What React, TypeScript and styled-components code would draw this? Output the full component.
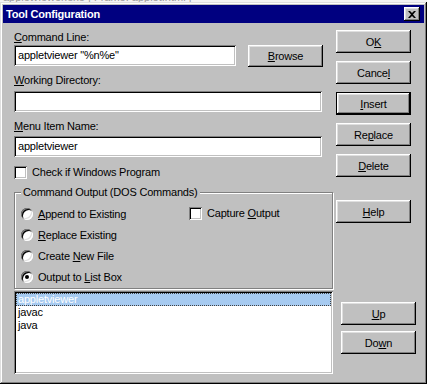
import React, { useState } from 'react';
import styled, { createGlobalStyle, css } from 'styled-components';

const GlobalStyle = createGlobalStyle`
  html, body {
    margin: 0;
    padding: 0;
    background: #ffffff;
  }
  body {
    font-family: "Liberation Sans", Arial, sans-serif;
    font-size: 11px;
    color: #000;
  }
`;

const raised = css`
  box-shadow: inset -1px -1px #000000, inset 1px 1px #ffffff,
    inset -2px -2px #808080, inset 2px 2px #dfdfdf;
`;

const sunken = css`
  box-shadow: inset 1px 1px #808080, inset -1px -1px #ffffff,
    inset 2px 2px #000000, inset -2px -2px #c0c0c0;
`;

const Page = styled.div`
  display: flex;
  flex-direction: column;
  width: 430px;
  height: 388px;
  overflow: hidden;
`;

// the window behind the dialog, only its bottom edge shows
const BackStrip = styled.div`
  height: 2px;
  width: 427px;
  overflow: hidden;
  background: #f4f4f4;
  color: #9a9a9a;
  font-size: 11px;
  line-height: 11px;
  white-space: nowrap;
  padding-left: 3px;
  box-sizing: border-box;
`;

const BackText = styled.div`
  margin-top: -8px;
`;

const Dialog = styled.div`
  width: 427px;
  height: 382px;
  box-sizing: border-box;
  background: #c0c0c0;
  padding: 3px;
  box-shadow: inset -1px -1px #000000, inset 1px 1px #dfdfdf,
    inset -2px -2px #808080, inset 2px 2px #ffffff;
`;

const TitleBar = styled.div`
  height: 18px;
  background: #000080;
  display: flex;
  align-items: center;
  justify-content: space-between;
  padding: 0 4px 0 3px;
`;

const TitleText = styled.span`
  color: #ffffff;
  font-weight: bold;
  font-size: 11px;
  letter-spacing: -0.2px;
`;

const CloseButton = styled.button`
  width: 16px;
  height: 14px;
  padding: 0;
  border: 0;
  background: #c0c0c0;
  display: flex;
  align-items: center;
  justify-content: center;
  ${raised};
`;

const Body = styled.div`
  display: flex;
  padding: 0 0 0 11px;
`;

const LeftColumn = styled.div`
  width: 319px;
  display: flex;
  flex-direction: column;
`;

const RightColumn = styled.div`
  margin-left: 3px;
  padding-top: 7px;
  width: 80px;
  display: flex;
  flex-direction: column;
`;

const Label = styled.div<{ $top: number }>`
  margin-top: ${({ $top }) => $top}px;
  line-height: 13px;
  height: 13px;
  letter-spacing: -0.2px;
  white-space: nowrap;
`;

const Key = styled.span`
  text-decoration: underline;
  text-underline-offset: 1px;
`;

const FieldRow = styled.div`
  display: flex;
  align-items: flex-start;
  margin-top: 1px;
`;

const TextField = styled.div<{ $width: number; $top?: number }>`
  width: ${({ $width }) => $width}px;
  height: 21px;
  margin-top: ${({ $top }) => $top ?? 0}px;
  box-sizing: border-box;
  background: #ffffff;
  padding: 0 4px;
  line-height: 21px;
  letter-spacing: -0.2px;
  white-space: nowrap;
  ${sunken};
`;

const Button = styled.button<{ $default?: boolean; $top?: number; $shift?: number }>`
  width: 75px;
  height: 23px;
  margin-top: ${({ $top }) => $top ?? 0}px;
  margin-left: ${({ $shift }) => $shift ?? 0}px;
  padding: 0;
  border: 0;
  background: #c0c0c0;
  font-family: "Liberation Sans", Arial, sans-serif;
  font-size: 11px;
  letter-spacing: -0.2px;
  color: #000;
  ${({ $default }) =>
    $default
      ? css`
          box-shadow: inset 0 0 0 1px #000000, inset -2px -2px #000000,
            inset 2px 2px #ffffff, inset -3px -3px #808080,
            inset 3px 3px #dfdfdf;
        `
      : raised};
`;

const BrowseButton = styled(Button)`
  margin-left: 12px;
  margin-top: 0;
  height: 22px;
`;

const CheckRow = styled.div<{ $top?: number }>`
  display: flex;
  align-items: center;
  gap: 5px;
  height: 14px;
  margin-top: ${({ $top }) => $top ?? 0}px;
  letter-spacing: -0.2px;
  white-space: nowrap;
`;

const CheckBox = styled.span`
  width: 13px;
  height: 13px;
  box-sizing: border-box;
  background: #ffffff;
  flex: none;
  ${sunken};
`;

const Group = styled.div`
  position: relative;
  margin-top: 13px;
  height: 97px;
  box-sizing: border-box;
  border: 1px solid #808080;
  box-shadow: inset 1px 1px #ffffff, 1px 1px #ffffff;
  display: flex;
  padding: 10px 0 0 6px;
`;

const Legend = styled.span`
  position: absolute;
  top: -7px;
  left: 6px;
  padding: 0 2px;
  background: #c0c0c0;
  line-height: 13px;
  letter-spacing: -0.2px;
  white-space: nowrap;
`;

const RadioList = styled.div`
  width: 168px;
  display: flex;
  flex-direction: column;
`;

const RadioRow = styled.label`
  display: flex;
  align-items: center;
  gap: 5px;
  height: 21px;
  letter-spacing: -0.2px;
  white-space: nowrap;
`;

const RadioDot = styled.span<{ $on: boolean }>`
  width: 12px;
  height: 12px;
  border-radius: 50%;
  background: #ffffff;
  flex: none;
  position: relative;
  box-shadow: inset 1px 1px #808080, inset -1px -1px #ffffff,
    inset 2px 2px #000000, inset -2px -2px #dfdfdf;
  &::after {
    content: '';
    display: ${({ $on }) => ($on ? 'block' : 'none')};
    position: absolute;
    left: 4px;
    top: 4px;
    width: 4px;
    height: 4px;
    border-radius: 50%;
    background: #000;
  }
`;

const CaptureCol = styled.div`
  padding-top: 3px;
`;

const ListBox = styled.div`
  margin-top: 2px;
  width: 319px;
  height: 83px;
  box-sizing: border-box;
  background: #ffffff;
  padding: 2px;
  ${sunken};
`;

const ListItem = styled.div<{ $selected?: boolean }>`
  height: 13px;
  line-height: 13px;
  padding-left: 2px;
  box-sizing: border-box;
  letter-spacing: -0.2px;
  color: ${({ $selected }) => ($selected ? '#ffffff' : '#000000')};
  background: ${({ $selected }) => ($selected ? '#a6caf0' : 'transparent')};
  outline: ${({ $selected }) => ($selected ? '1px dotted #404040' : 'none')};
  outline-offset: -1px;
`;

const radios = [
  { pre: '', key: 'A', post: 'ppend to Existing' },
  { pre: '', key: 'R', post: 'eplace Existing' },
  { pre: 'Create ', key: 'N', post: 'ew File' },
  { pre: 'Output to ', key: 'L', post: 'ist Box' },
];

const tools = ['appletviewer', 'javac', 'java'];

export default function App() {
  const [choice, setChoice] = useState(3);
  const [selected, setSelected] = useState(0);

  return (
    <Page>
      <GlobalStyle />
      <BackStrip>
        <BackText>appletviewer.exe | Frame: applet.html |</BackText>
      </BackStrip>
      <Dialog>
        <TitleBar>
          <TitleText>Tool Configuration</TitleText>
          <CloseButton aria-label="Close">
            <svg width="8" height="7" viewBox="0 0 8 7">
              <path d="M0 0h2l2 2 2-2h2L5 3.5 8 7H6L4 5 2 7H0l3-3.5z" fill="#000" />
            </svg>
          </CloseButton>
        </TitleBar>
        <Body>
          <LeftColumn>
            <Label $top={8}>
              <Key>C</Key>ommand Line:
            </Label>
            <FieldRow>
              <TextField $width={222}>appletviewer "%n%e"</TextField>
              <BrowseButton>
                <Key>B</Key>rowse
              </BrowseButton>
            </FieldRow>
            <Label $top={7}>
              <Key>W</Key>orking Directory:
            </Label>
            <TextField $width={308} $top={4} />
            <Label $top={8}>
              <Key>M</Key>enu Item Name:
            </Label>
            <TextField $width={308} $top={3}>appletviewer</TextField>
            <CheckRow $top={8}>
              <CheckBox />
              Check if Windows Program
            </CheckRow>
            <Group>
              <Legend>Command Output (DOS Commands)</Legend>
              <RadioList>
                {radios.map((r, i) => (
                  <RadioRow key={i} onClick={() => setChoice(i)}>
                    <RadioDot $on={choice === i} />
                    <span>
                      {r.pre}
                      <Key>{r.key}</Key>
                      {r.post}
                    </span>
                  </RadioRow>
                ))}
              </RadioList>
              <CaptureCol>
                <CheckRow>
                  <CheckBox />
                  <span>
                    Capture <Key>O</Key>utput
                  </span>
                </CheckRow>
              </CaptureCol>
            </Group>
            <ListBox>
              {tools.map((t, i) => (
                <ListItem key={t} $selected={selected === i} onClick={() => setSelected(i)}>
                  {t}
                </ListItem>
              ))}
            </ListBox>
          </LeftColumn>
          <RightColumn>
            <Button>
              O<Key>K</Key>
            </Button>
            <Button $top={8}>
              Cance<Key>l</Key>
            </Button>
            <Button $top={8} $default>
              <Key>I</Key>nsert
            </Button>
            <Button $top={8}>
              Re<Key>p</Key>lace
            </Button>
            <Button $top={8}>
              <Key>D</Key>elete
            </Button>
            <Button $top={23}>
              <Key>H</Key>elp
            </Button>
            <Button $top={79} $shift={5}>
              <Key>U</Key>p
            </Button>
            <Button $top={6} $shift={5}>
              Do<Key>w</Key>n
            </Button>
          </RightColumn>
        </Body>
      </Dialog>
    </Page>
  );
}
